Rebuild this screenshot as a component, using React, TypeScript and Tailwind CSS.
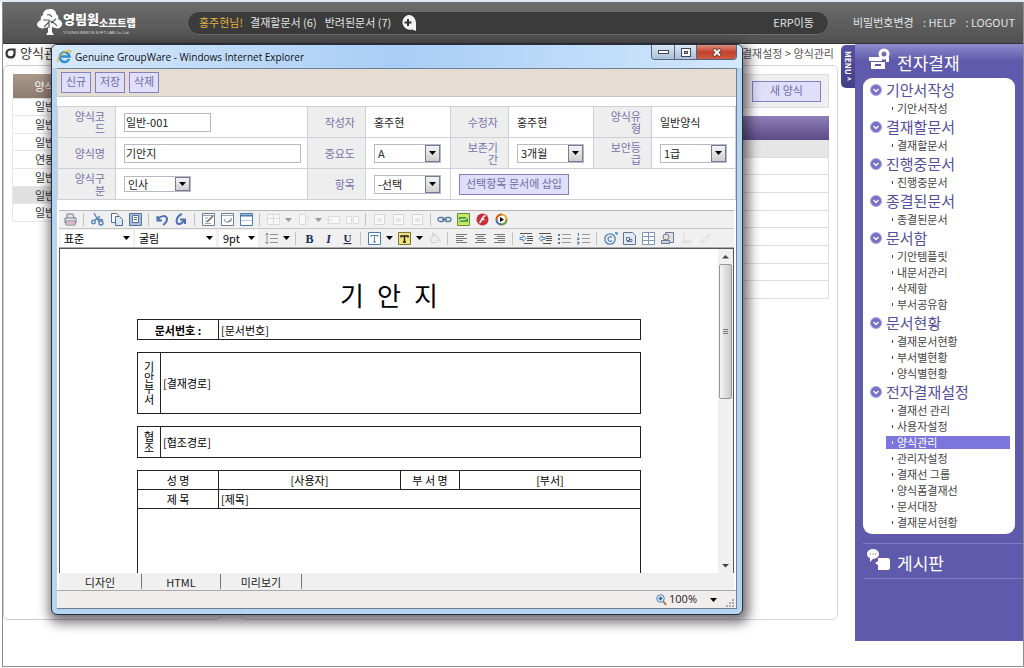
import type { ReactNode } from "react";

const FONT = "font-['Noto_Sans_CJK_KR','Liberation_Sans',sans-serif]";

function Tree() {
  return (
    <svg width="26" height="27" viewBox="0 0 26 27" fill="white" aria-hidden="true">
      <path d="M13 0c4 0 6 2 6 5 2 1 3 3 2 5 3 1 5 4 4 6-1 3-4 4-7 3l-3-1v5l2 3H9l2-3v-5l-3 1c-3 1-7 0-8-3 0-2 1-4 4-5-1-2 0-4 2-5C6 3 8 0 13 0Z" />
      <path d="M10 6c2-1 4 0 5 2M6 11h6v8M12 13l-5 5M13 12c3 0 4 2 7 5M19 10l-5 4" stroke="#5c5c5c" strokeWidth="1.2" fill="none" />
    </svg>
  );
}

function IELogo() {
  return (
    <svg width="15" height="15" viewBox="0 0 16 16" fill="none" aria-hidden="true">
      <path d="M13 10.5A5.2 5.2 0 1 1 13.3 8H4" stroke="#2d8fcf" strokeWidth="2.6" />
      <path d="M2 13.5C-.5 14 1 9 5 5.5S15 .5 14.600 2.500c-.2 1-.6 1.500-1 2.200" stroke="#e3b23a" strokeWidth="1.3" />
    </svg>
  );
}

function Down({ dim = false }: { dim?: boolean }) {
  return (
    <svg width="7" height="4" viewBox="0 0 7 4" className={dim ? "fill-[#9a9a9a]" : "fill-black"} aria-hidden="true">
      <path d="M0 0h7L3.500 4Z" />
    </svg>
  );
}

type SelectProps = { label: string; options: string[]; short?: boolean };

function Select({ label, options, short = false }: SelectProps) {
  return (
    <span className="grid w-[67px] items-center border border-[#b9b9c4] bg-white">
      <select
        aria-label={label}
        className={`${short ? "h-[14px]" : "h-[17px]"} col-start-1 row-start-1 w-full appearance-none bg-transparent pl-[3px] text-[11px] leading-[14px] text-[#222] outline-none`}
      >
        {options.map((o) => (
          <option key={o}>{o}</option>
        ))}
      </select>
      <span
        className={`${short ? "h-[14px]" : "h-[17px]"} pointer-events-none col-start-1 row-start-1 flex w-[15px] items-center justify-center justify-self-end border border-[#77789a] bg-linear-to-b from-[#f4f4f4] to-[#cfcfcf]`}
      >
        <Down />
      </span>
    </span>
  );
}

function BarSelect({ label, value, width }: { label: string; value: string; width: string }) {
  return (
    <span className={`${width} grid h-[17px] items-center bg-white`}>
      <select aria-label={label} className="col-start-1 row-start-1 w-full appearance-none bg-transparent pl-[4px] text-[11px] leading-[15px] text-black outline-none">
        <option>{value}</option>
      </select>
      <span className="pointer-events-none col-start-1 row-start-1 mr-[3px] justify-self-end">
        <Down />
      </span>
    </span>
  );
}

const btn = "border border-[#8580c0] bg-[#e0dffa] text-[11px] text-[#706ba6]";

function Th({ children }: { children: ReactNode }) {
  return (
    <th scope="row" className="border border-[#cfcfd6] bg-[#efeeee] pr-[10px] pl-[12px] text-right text-[11px] leading-[12px] font-normal break-all text-[#7772aa]">
      {children}
    </th>
  );
}

function Td({ children, span }: { children: ReactNode; span?: number }) {
  return (
    <td colSpan={span} className="border border-[#cfcfd6] pl-[8px] text-[11px] text-[#222]">
      {children}
    </td>
  );
}

const rule = "stroke-[#8b93a5]";

const icons: Record<string, { label: string; art: ReactNode; dim?: boolean }> = {
  print: { label: "인쇄", art: <><path d="M4 6V2h6l1 4M2 6h11v5H2Z" fill="#e4e4ea" stroke="#777a8c" /><path d="M3 9h9v4H3Z" fill="#fff" stroke="#777a8c" /><path d="M4 11h7" stroke="#c96c7a" /></> },
  cut: { label: "잘라내기", art: <g fill="none" stroke="#4c7fb8" strokeWidth="1.3"><path d="m4 1 5 9M10 4 5 8" /><circle cx="3.500" cy="10" r="1.800" /><circle cx="11" cy="11" r="2" /><path d="m8 7 5 1" /></g> },
  copy: { label: "복사", art: <g fill="#fff" stroke="#4a6f9c"><path d="M2.500 1.500h5l2 2v7h-7Z" /><path d="M6.500 4.500h4l3 3v6h-7Z" fill="#dbe8f6" /></g> },
  paste: { label: "붙여넣기", art: <g stroke="#55709c"><path d="M1.500 1.500h12v12h-12Z" fill="#a9bedc" /><path d="M4.500 3.500h6v7h-6Z" fill="#fff" /><path d="M6 5.500h3M6 7.500h3" /></g> },
  undo: { label: "실행 취소", art: <path d="M2.500 4v4.500H7M3 8c2-5 9-5 9-1 0 2-1 4-4 6" fill="none" stroke="#4a72b4" strokeWidth="2" /> },
  redo: { label: "다시 실행", art: <path d="M8 2C2 4 1 12 5 12c3 0 4-2 5-4M6 7.500h5V12" fill="none" stroke="#4a72b4" strokeWidth="2" /> },
  edit: { label: "편집", art: <><path d="M1.500 1.500h12v12h-12Z" fill="#fff" stroke="#6b7f9c" /><path d="M2 3.500h11M4 6h3M4 9h2M4 11.500h6" stroke="#93a5bf" /><path d="m6 10 6-6" stroke="#675f4a" strokeWidth="1.500" /></> },
  reload: { label: "새로 고침", art: <><path d="M1.500 1.500h12v12h-12Z" fill="#fff" stroke="#6b7f9c" /><path d="M2 3.500h11" stroke="#93a5bf" /><path d="M4 7c1 4 5 4 7 1M11 6v3H8" fill="none" stroke="#6b7895" /></> },
  form: { label: "창", art: <><path d="M1.500 1.500h12v12h-12Z" fill="#fff" stroke="#4f78ad" /><path d="M2 3.500h11" stroke="#4f78ad" strokeWidth="2" /><path d="M2 8.500h11" stroke="#b9c8db" /></> },
  grid: { label: "표", dim: true, art: <path d="M1.500 2.500h12v10h-12ZM1.500 6.500h12M7.500 2.500v10" fill="#f8f8f8" stroke="#dadada" /> },
  cell: { label: "셀", dim: true, art: <path d="M3.500 2.500h6v10h-6ZM9 5h3v4" fill="#f8f8f8" stroke="#dadada" /> },
  merge: { label: "병합", dim: true, art: <path d="M2.500 4.500h11v7h-11ZM1 8h6" fill="#f8f8f8" stroke="#dcdcdc" /> },
  split: { label: "분할", dim: true, art: <path d="M1.500 4.500h5v7h-5ZM8.500 4.500h5v7h-5Z" fill="#f8f8f8" stroke="#dcdcdc" /> },
  box: { label: "개체", dim: true, art: <path d="M2.500 2.500h10v10h-10ZM5 7h5M5 9h5" fill="#f8f8f8" stroke="#d6d6d6" /> },
  link: { label: "링크", art: <g fill="none" stroke="#56799f" strokeWidth="1.300"><rect x="1" y="5.500" width="6" height="4" rx="2" /><rect x="8" y="5.500" width="6" height="4" rx="2" /><path d="M5 7.500h5" /></g> },
  image: { label: "그림", art: <><path d="M1.500 1.500h12v12h-12Z" fill="#c5e86a" stroke="#6c8a35" /><path d="M3 5h9v5H3Z" fill="#4d9f36" /><path d="m3 9 3-2 2 1 4-3" stroke="#fff" fill="none" /></> },
  flash: { label: "플래시", art: <><circle cx="7.500" cy="7.500" r="6" fill="#c8303a" /><path d="M10.500 3.500C7 4 7 9 4.500 11M6 7.500h3.500" stroke="#fff" strokeWidth="1.600" fill="none" /></> },
  media: { label: "미디어", art: <><circle cx="7.500" cy="7.500" r="5" fill="#fff" stroke="#e6a62a" strokeWidth="2" /><path d="M2.500 7.500a5 5 0 0 1 5-5" stroke="#d8572e" strokeWidth="2" fill="none" /><path d="M7.500 12.500a5 5 0 0 1-5-5" stroke="#3b74bd" strokeWidth="2" fill="none" /><path d="M12.500 7.500a5 5 0 0 1-5 5" stroke="#5e9a3a" strokeWidth="2" fill="none" /><path d="m6 5 4 2.500L6 10Z" /></> },
  lines: { label: "줄 간격", art: <path d="M6 3.500h8M6 7.500h8M6 11.500h8M3 2v11M1.500 4 3 2l1.500 2M1.500 11 3 13l1.500-2" fill="none" className={rule} /> },
  bold: { label: "굵게", art: <text x="7.500" y="12" textAnchor="middle" fontSize="12" fontWeight="900" fontFamily="Liberation Serif" fill="#1d2c52">B</text> },
  italic: { label: "기울임", art: <text x="7.500" y="12" textAnchor="middle" fontSize="12" fontWeight="bold" fontStyle="italic" fontFamily="Liberation Serif" fill="#1d2c52">I</text> },
  under: { label: "밑줄", art: <text x="7.500" y="11" textAnchor="middle" fontSize="11" fontWeight="bold" textDecoration="underline" fontFamily="Liberation Serif" fill="#1d2c52">U</text> },
  color: { label: "글자 색", art: <><path d="M1.500 1.500h12v12h-12Z" fill="#fff" stroke="#4f78ad" /><path d="M4 6V4.500h7V6M7.500 5v6M6 11h3" stroke="#5d7fae" fill="none" /></> },
  back: { label: "배경 색", art: <><path d="M1.500 1.500h12v12h-12Z" fill="#f1e27c" stroke="#7a7340" /><path d="M4 6.500V5h7v1.500M7.500 5v5.500M6 11h3" stroke="#222" strokeWidth="1.500" fill="none" /></> },
  fill: { label: "채우기", dim: true, art: <path d="m3 8 5-5 4 5-4 4H5ZM6 5V1M13 9v3" fill="#eee" stroke="#c9c9c9" /> },
  left: { label: "왼쪽 정렬", art: <path d="M2 3.500h11M2 5.500h8M2 7.500h11M2 9.500h7M2 11.500h11" stroke="#777" /> },
  center: { label: "가운데 정렬", art: <path d="M2 3.500h11M4 5.500h7M2 7.500h11M4 9.500h7M2 11.500h11" stroke="#777" /> },
  right: { label: "오른쪽 정렬", art: <path d="M2 3.500h11M5 5.500h8M2 7.500h11M6 9.500h7M2 11.500h11" stroke="#777" /> },
  indent: { label: "들여쓰기", art: <><path d="M1 2.500h12M8 5.500h6M8 7.500h6M8 9.500h6M5 12.500h8" stroke="#555" /><path d="m7 7.500-3-3v2H1v2h3v2Z" fill="#fff" stroke="#4f86be" /></> },
  outdent: { label: "내어쓰기", art: <><path d="M1 2.500h12M8 5.500h6M8 7.500h6M8 9.500h6M5 12.500h8" stroke="#555" /><path d="m1 7.500 3-3v2h3v2H4v2Z" fill="#fff" stroke="#4f86be" /></> },
  bullets: { label: "글머리 기호", art: <><path d="M5 3.500h9M5 7.500h9M5 11.500h9" stroke="#999" /><path d="M1 3h2v2H1ZM1 7h2v2H1ZM1 11h2v2H1Z" fill="#4f78ad" /></> },
  numbers: { label: "번호", art: <><path d="M6 3.500h8M6 7.500h8M6 11.500h8" stroke="#999" /><path d="M2.500 2v3M1 7h2v1.500H1M1 11h2v2H1" stroke="#4f78ad" fill="none" /></> },
  symbol: { label: "특수 문자", art: <g fill="none" stroke="#4782b5" strokeWidth="1.300"><circle cx="7" cy="8" r="5.200" /><path d="M9 6.500c-1-1.500-4-1-4 1.500s3 3 4 1.500M12 2h2v2" /></g> },
  doc: { label: "서식", art: <g stroke="#5f7397"><path d="M1.500 1.500h9l3 3v9h-12Z" fill="#e3eaf5" /><path d="M4.500 6.500h3v3h-3ZM8 8.500h2v2H5" fill="none" /></g> },
  table: { label: "표 삽입", art: <path d="M1.500 1.500h12v12h-12ZM2 5.500h11M2 9.500h11M7.500 2v11" fill="#fff" stroke="#7f95b5" /> },
  stamp: { label: "도장", art: <g stroke="#6f7891"><path d="M5.500 1.500h8v10h-8Z" fill="#dbe2ee" /><circle cx="6" cy="6" r="3" fill="#f3dfd0" /><path d="M1.500 9.500h8v3h-8Z" fill="#c9d6e8" /></g> },
  attach: { label: "첨부", dim: true, art: <path d="M5 2v6a3 3 0 0 0 6 0M3 10h9v2H3Z" fill="none" stroke="#dcdcdc" /> },
  brush: { label: "서식 복사", dim: true, art: <path d="M2 12c3-1 3-5 5-6s5-3 5-3-1 4-4 6-3 2-6 3" fill="none" stroke="#dcdcdc" /> },
};

function Tools({ items }: { items: string[] }) {
  return (
    <>
      {items.map((name, i) => {
        if (name === "|") return <span key={i} className="mr-[4px] ml-[3px] h-[13px] w-px shrink-0 bg-[#c2c2c2]" />;
        if (name === "v" || name === "-")
          return (
            <span key={i} className="flex w-[11px] shrink-0 justify-center">
              <Down dim={name === "-"} />
            </span>
          );
        const icon = icons[name];
        return (
          <button key={i} type="button" aria-label={icon.label} disabled={icon.dim} className="flex h-[17px] w-[19px] shrink-0 items-center justify-center">
            <svg width="15" height="15" viewBox="0 0 15 15">
              {icon.art}
            </svg>
          </button>
        );
      })}
    </>
  );
}

const docTable = "w-full table-fixed border-collapse text-[11px] leading-[16px] text-black";
const cell = "border border-[#222] px-[2px]";

function FormWindow() {
  return (
    <section
      aria-label="Genuine GroupWare"
      className="absolute top-[44px] left-[51px] z-10 flex w-[692px] flex-col rounded-[6px] border border-[#27303d] bg-[#b4d4f0] px-[5px] pb-[5px] shadow-[2px_4px_12px_4px_rgba(30,20,30,0.6)]"
    >
      <header className="-mx-[5px] flex h-[23px] items-center rounded-t-[5px] bg-linear-to-r from-[#d6e8fa] via-[#a9cdf6] to-[#d3e8fb] pl-[5px]">
        <IELogo />
        <h1 className="ml-[3px] flex-1 font-['Open_Sans','Noto_Sans',sans-serif] text-[10px] leading-[14px] text-[#111]">Genuine GroupWare - Windows Internet Explorer</h1>
        <div className="mr-[5px] flex h-[15px] self-start overflow-hidden rounded-b-[4px] border border-t-0 border-[#55657c]">
          <button type="button" aria-label="최소화" className="flex w-[23px] items-center justify-center border-r border-[#55657c] bg-linear-to-b from-[#dbe8f5] to-[#a9c0d8]">
            <svg width="11" height="5"><rect x=".5" y=".5" width="10" height="3" fill="#fff" stroke="#445" /></svg>
          </button>
          <button type="button" aria-label="최대화" className="flex w-[22px] items-center justify-center border-r border-[#55657c] bg-linear-to-b from-[#dbe8f5] to-[#a9c0d8]">
            <svg width="10" height="9"><rect x=".5" y=".5" width="9" height="8" fill="#fff" stroke="#445" /><rect x="3.500" y="3.500" width="3" height="2" fill="#a9c0d8" stroke="#445" /></svg>
          </button>
          <button type="button" aria-label="닫기" className="flex w-[39px] items-center justify-center bg-linear-to-b from-[#dd8d7d] via-[#c4402c] to-[#cc5a42]">
            <svg width="10" height="9" viewBox="0 0 10 9"><path d="m1.500 1 7 7m0-7-7 7" stroke="#533" strokeWidth="3.400" /><path d="m2 1.500 6 6m0-6-6 6" stroke="#fff" strokeWidth="2" /></svg>
          </button>
        </div>
      </header>

      <div className="flex flex-col border-y border-r border-[#6c8196] bg-white">
        <div className="flex h-[28px] items-center gap-[4px] border-b border-[#c9c3bb] bg-[#e5ddd4] pl-[4px]">
          {["신규", "저장", "삭제"].map((t) => (
            <button key={t} type="button" className={`${btn} h-[21px] w-[30px] pb-[3px] leading-[14px]`}>
              {t}
            </button>
          ))}
        </div>

        <table className="mt-[9px] h-[94px] w-full table-fixed border-collapse">
          <colgroup>
            <col className="w-[58px]" />
            <col className="w-[192px]" />
            <col className="w-[58px]" />
            <col className="w-[85px]" />
            <col className="w-[58px]" />
            <col className="w-[85px]" />
            <col className="w-[58px]" />
            <col />
          </colgroup>
          <tbody>
            <tr className="h-[31px]">
              <Th><label htmlFor="code">양식코드</label></Th>
              <Td><input id="code" defaultValue="일반-001" className="block h-[19px] w-[87px] border border-[#b9b9c4] px-[1px] text-[11px] outline-none" /></Td>
              <Th>작성자</Th>
              <Td>홍주현</Td>
              <Th>수정자</Th>
              <Td>홍주현</Td>
              <Th>양식유형</Th>
              <Td>일반양식</Td>
            </tr>
            <tr className="h-[31px]">
              <Th><label htmlFor="name">양식명</label></Th>
              <Td><input id="name" defaultValue="기안지" className="block h-[19px] w-[177px] border border-[#b9b9c4] px-[1px] text-[11px] outline-none" /></Td>
              <Th>중요도</Th>
              <Td><Select label="중요도" options={["A", "B"]} /></Td>
              <Th>보존기간</Th>
              <Td><Select label="보존기간" options={["3개월", "1년"]} /></Td>
              <Th>보안등급</Th>
              <Td><Select label="보안등급" options={["1급", "2급"]} /></Td>
            </tr>
            <tr className="h-[31px]">
              <Th>양식구분</Th>
              <Td><Select label="양식구분" options={["인사", "총무"]} short /></Td>
              <Th>항목</Th>
              <Td><Select label="항목" options={["-선택"]} /></Td>
              <Td span={4}>
                <button type="button" className={`${btn} block h-[21px] w-[110px] pb-[3px] leading-[14px]`}>선택항목 문서에 삽입</button>
              </Td>
            </tr>
          </tbody>
        </table>

        <div className="mx-[2px] mt-[10px] flex flex-col border-t border-[#b5b5b5] bg-[#f1f0f0]">
          <div className="flex h-[18px] items-center border-b border-[#c6c6c6] pl-[2px]">
            <Tools items={["print", "|", "cut", "copy", "paste", "|", "undo", "redo", "|", "edit", "reload", "form", "|", "grid", "-", "cell", "-", "merge", "split", "|", "box", "box", "box", "|", "link", "image", "flash", "media"]} />
          </div>
          <div className="flex h-[19px] items-center border-b border-[#aaa] pl-[1px]">
            <BarSelect label="스타일" value="표준" width="w-[73px]" />
            <span className="w-[2px]" />
            <BarSelect label="글꼴" value="굴림" width="w-[81px]" />
            <span className="w-[3px]" />
            <BarSelect label="크기" value="9pt" width="w-[39px]" />
            <span className="w-[4px]" />
            <Tools items={["lines", "v", "|", "bold", "italic", "under", "|", "color", "v", "back", "v", "fill", "|", "left", "center", "right", "|", "indent", "outdent", "bullets", "numbers", "|", "symbol", "doc", "table", "stamp", "attach", "brush"]} />
          </div>
          <div className="flex h-[325px] overflow-hidden border-t border-r border-l border-[#555] bg-white">
            <article className="flex-1">
              <div className="mx-auto flex w-[504px] flex-col gap-[12px]">
                <h2 className="mt-[27px] -mb-[7px] text-center text-[26px] leading-[38px] font-normal text-black">기&ensp;안&ensp;지</h2>
                <table className={`${docTable} h-[21px]`}>
                  <tbody>
                    <tr>
                      <th className={`${cell} w-[81px] font-bold`}>문서번호 :</th>
                      <td className={cell}>[문서번호]</td>
                    </tr>
                  </tbody>
                </table>
                <table className={`${docTable} h-[62px]`}>
                  <tbody>
                    <tr>
                      <th className={`${cell} w-[23px] px-[5px] leading-[11px] font-normal break-all`}>기안부서</th>
                      <td className={cell}>[결재경로]</td>
                    </tr>
                  </tbody>
                </table>
                <table className={`${docTable} h-[32px]`}>
                  <tbody>
                    <tr>
                      <th className={`${cell} w-[23px] px-[5px] leading-[11px] font-normal break-all`}>협조</th>
                      <td className={cell}>[협조경로]</td>
                    </tr>
                  </tbody>
                </table>
                <table className={docTable}>
                  <colgroup>
                    <col className="w-[81px]" />
                    <col className="w-[182px]" />
                    <col className="w-[59px]" />
                    <col />
                  </colgroup>
                  <tbody>
                    <tr className="h-[19px]">
                      <th className={`${cell} font-normal`}>성 명</th>
                      <td className={`${cell} text-center`}>[사용자]</td>
                      <th className={`${cell} font-normal`}>부 서 명</th>
                      <td className={`${cell} text-center`}>[부서]</td>
                    </tr>
                    <tr className="h-[19px]">
                      <th className={`${cell} font-normal`}>제 목</th>
                      <td colSpan={3} className={cell}>[제목]</td>
                    </tr>
                    <tr className="h-[90px]">
                      <td colSpan={4} className={cell} />
                    </tr>
                  </tbody>
                </table>
              </div>
            </article>
            <div className="flex w-[15px] flex-col items-center bg-[#f0f0f0]" aria-hidden="true">
              <svg width="7" height="15" viewBox="0 0 7 15"><path d="M0 9.500h7L3.500 6Z" fill="#444" /></svg>
              <div className="flex h-[135px] w-[13px] flex-col items-center justify-center gap-[1px] rounded-[2px] border border-[#979797] bg-linear-to-r from-[#f5f5f5] to-[#c9cacc]">
                <span className="h-px w-[5px] bg-[#777]" />
                <span className="h-px w-[5px] bg-[#777]" />
                <span className="h-px w-[5px] bg-[#777]" />
              </div>
              <svg width="7" height="15" viewBox="0 0 7 15" className="mt-auto"><path d="M0 6h7L3.500 9.500Z" fill="#444" /></svg>
            </div>
          </div>
          <div className="flex h-[17px] items-center text-[11px] leading-[14px] text-[#222]">
            <button type="button" className="h-[15px] w-[83px] border-r border-[#777]">디자인</button>
            <button type="button" className="h-[15px] w-[79px] border-r border-[#777]">HTML</button>
            <button type="button" className="h-[15px] w-[81px] border-r border-[#777]">미리보기</button>
          </div>
        </div>
        <footer className="flex h-[18px] items-center justify-end border-t border-[#a9a9a9] bg-[#f1edec] font-['Open_Sans','Noto_Sans',sans-serif] text-[11px] text-[#222]">
          <svg width="11" height="12" viewBox="0 0 11 12" aria-hidden="true">
            <path d="m7 7 3 4" stroke="#b17a3d" strokeWidth="2" />
            <circle cx="4.500" cy="4.500" r="3.800" fill="#dff0fb" stroke="#4b83b8" />
            <path d="M4.500 2.500v4M2.500 4.500h4" stroke="#235f9c" strokeWidth="1.300" />
          </svg>
          <span className="mr-[13px] ml-[2px]">100%</span>
          <Down />
          <svg width="9" height="9" viewBox="0 0 9 9" className="mr-px ml-[9px] self-end" fill="#aaa" aria-hidden="true">
            <path d="M6 0h2v2H6ZM3 3h2v2H3ZM6 3h2v2H6ZM0 6h2v2H0ZM3 6h2v2H3ZM6 6h2v2H6Z" />
          </svg>
        </footer>
      </div>
    </section>
  );
}

const menu = [
  { title: "기안서작성", items: ["기안서작성"] },
  { title: "결재할문서", items: ["결재할문서"] },
  { title: "진행중문서", items: ["진행중문서"] },
  { title: "종결된문서", items: ["종결된문서"] },
  { title: "문서함", items: ["기안템플릿", "내문서관리", "삭제함", "부서공유함"] },
  { title: "문서현황", items: ["결재문서현황", "부서별현황", "양식별현황"] },
  { title: "전자결재설정", items: ["결재선 관리", "사용자설정", "양식관리", "관리자설정", "결재선 그룹", "양식폼결재선", "문서대장", "결재문서현황"] },
];

function Sidebar() {
  return (
    <>
      <button type="button" className="mt-px flex h-[43px] w-[14px] items-center justify-center rounded-l-[5px] bg-linear-to-b from-[#5651a4] to-[#443f86] text-[8px] leading-[10px] font-bold text-white">
        <span className="[writing-mode:vertical-rl]">MENU ^</span>
      </button>
      <aside className="flex h-[597px] w-[168px] flex-col bg-[#5f5aab]">
        <div className="flex h-[34px] items-center bg-linear-to-b from-[#8f8bcb] via-[#5f5aab] to-[#5f5aab] pl-[14px] text-white">
          <svg width="21" height="23" viewBox="0 0 21 23" className="mb-[4px]" aria-hidden="true">
            <path d="M0 9h13v4H0ZM2 14h14v7H2Z" fill="white" />
            <path d="M6 17h6" stroke="#5f5aab" strokeWidth="2" />
            <circle cx="15" cy="6" r="4" fill="none" stroke="white" strokeWidth="3" />
            <path d="M17 9h3v5h-3Z" fill="white" />
          </svg>
          <h2 className="mt-[4px] ml-[7px] text-[17px] leading-[20px]">전자결재</h2>
        </div>
        <nav className="mx-[8px] rounded-[9px] bg-white pt-px pb-[4px]">
          {menu.map((g) => (
            <section key={g.title}>
              <h3 className="flex h-[21px] items-center gap-[4px] pl-[7px] text-[15px] leading-[20px] text-[#544e9c]">
                <svg width="12" height="12" viewBox="0 0 12 12" aria-hidden="true">
                  <circle cx="6" cy="6" r="5.500" fill="#7771c6" stroke="#aaa6e2" />
                  <path d="m3.500 5 2.500 2.500L8.500 5" fill="none" stroke="white" strokeWidth="1.300" />
                </svg>
                {g.title}
              </h3>
              <ul>
                {g.items.map((t) => (
                  <li key={t} className="flex h-[16px] items-center pr-[5px] pl-[23px] text-[11px] leading-[13px]">
                    <a href="#" className={`flex h-[13px] flex-1 items-center gap-[4px] pl-[6px] ${t === "양식관리" ? "bg-[#7c76dc] text-white" : "text-[#444]"}`}>
                      <span className="h-[3px] w-px bg-current" />
                      {t}
                    </a>
                  </li>
                ))}
              </ul>
            </section>
          ))}
        </nav>
        <div className="mt-[9px] ml-[8px] flex h-[36px] items-center border-y border-[#817dc3] pl-[4px] text-white">
          <svg width="23" height="23" viewBox="0 0 23 23" className="mb-[4px]" aria-hidden="true">
            <ellipse cx="6" cy="6" rx="6" ry="5" fill="white" />
            <path d="M3 10v4l4-4Z" fill="white" />
            <path d="M3 6h1M5.500 6h1M8 6h1" stroke="#5f5aab" />
            <path d="M11 10h10q2 0 2 2v8q0 2-2 2H11v-5l-3-2 3-2Z" fill="white" />
          </svg>
          <h2 className="mt-[3px] ml-[7px] text-[17px] leading-[20px]">게시판</h2>
        </div>
      </aside>
    </>
  );
}

const forms = ["일반", "일반", "일반", "연동", "일반", "일반", "일반"];

export default function App() {
  return (
    <div className={`${FONT} relative flex min-h-screen flex-col bg-white text-[11px] text-[#444]`}>
      <div className="h-[2px] bg-[#dfe9f4]" />
      <div className="mb-px ml-[2px] flex flex-1 flex-col border-r border-b border-l border-[#8b8b93]">
        <header className="flex h-[42px] items-center border-b border-[#333] bg-linear-to-b from-[#6d6d6d] to-[#505050] text-[#e3e3e3]">
          <div className="flex w-[184px] items-center pl-[34px] text-white">
            <Tree />
            <div className="flex flex-col">
              <div className="flex items-end">
                <strong className="text-[13px] leading-[16px] font-black">영림원</strong>
                <strong className="-mb-[3px] text-[10px] leading-[14px] font-black">소프트랩</strong>
              </div>
              <span className="mt-[3px] font-['Liberation_Sans',sans-serif] text-[4px] leading-[5px] text-[#ddd]">YOUNGLIMWON SOFT LAB Co.,Ltd.</span>
            </div>
          </div>
          <div className="flex h-[24px] flex-1 items-center rounded-full border border-[#6e6e6e] bg-[#3b3b3b] pr-[14px] pl-[11px]">
            <span className="text-[#e5b443]">홍주현님!</span>
            <a href="#" className="ml-[7px]">결재할문서 (6)</a>
            <a href="#" className="ml-[8px]">반려된문서 (7)</a>
            <button type="button" aria-label="추가" className="ml-[9px]">
              <svg width="17" height="16" viewBox="0 0 17 16">
                <path d="M8 0a7.500 7.500 0 0 1 8 7.500V16l-4-1.500A7.500 7.500 0 1 1 8 0Z" fill="#f4f4f4" />
                <path d="M8 4v7M4.500 7.500h7" stroke="#333" strokeWidth="2" />
              </svg>
            </button>
            <a href="#" className="ml-auto">ERP이동</a>
          </div>
          <nav className="flex w-[194px] justify-between pr-[8px] pl-[24px]">
            <a href="#">비밀번호변경</a>
            <a href="#">: HELP</a>
            <a href="#">: LOGOUT</a>
          </nav>
        </header>

        <div className="flex items-start">
          <main className="min-w-0 flex-1 pr-[3px]">
            <div className="flex h-[21px] items-center justify-between pr-[4px] pb-[3px] pl-[2px]">
              <h2 className="flex items-center gap-[4px] text-[13px] leading-[18px] text-[#333]">
                <svg width="11" height="11" viewBox="0 0 11 11" aria-hidden="true">
                  <path d="M5 1.500h4.500V6A4 4 0 1 1 5 1.500Z" fill="none" stroke="#333" strokeWidth="2.200" />
                </svg>
                양식관리
              </h2>
              <p className="text-[#555]">전자결재 &gt; 전자결재설정 &gt; 양식관리</p>
            </div>
            <div className="flex h-[555px] gap-[20px]">
              <div className="w-[218px] rounded-[5px] border border-[#c9cbd8] pt-[8px] pl-[8px]">
                <table className="h-[148px] w-[200px] border-collapse text-[#333]">
                  <thead>
                    <tr className="h-[24px] bg-linear-to-b from-[#ab9a8b] to-[#8d7b6d] text-white">
                      <th className="pl-[22px] text-left font-normal">양식명</th>
                    </tr>
                  </thead>
                  <tbody>
                    {forms.map((f, i) => (
                      <tr key={i} className={i === 5 ? "bg-[#e0e0e0]" : ""}>
                        <td className="border border-[#e6e6e6] pl-[22px] leading-[15px]">{f}</td>
                      </tr>
                    ))}
                  </tbody>
                </table>
              </div>
              <div className="flex-1 rounded-[5px] border border-[#d6d4e2] px-[8px] pt-[8px]">
                <div className="flex h-[34px] items-center justify-end border border-[#dcdce2] bg-[#efeff1] pr-[7px]">
                  <button type="button" className={`${btn} h-[21px] w-[69px] pb-[3px] leading-[14px]`}>새 양식</button>
                </div>
                <div className="mt-[8px] h-[24px] bg-linear-to-b from-[#8f7fb9] to-[#5b4a86]" />
                <div className="grid h-[159px] auto-rows-fr">
                  {Array.from({ length: 9 }, (_, i) => (
                    <div key={i} className={`border-r border-b border-[#dedede] ${i === 0 ? "bg-[#e6e6e6]" : ""}`} />
                  ))}
                </div>
              </div>
            </div>
          </main>
          <Sidebar />
        </div>
      </div>
      <FormWindow />
    </div>
  );
}
